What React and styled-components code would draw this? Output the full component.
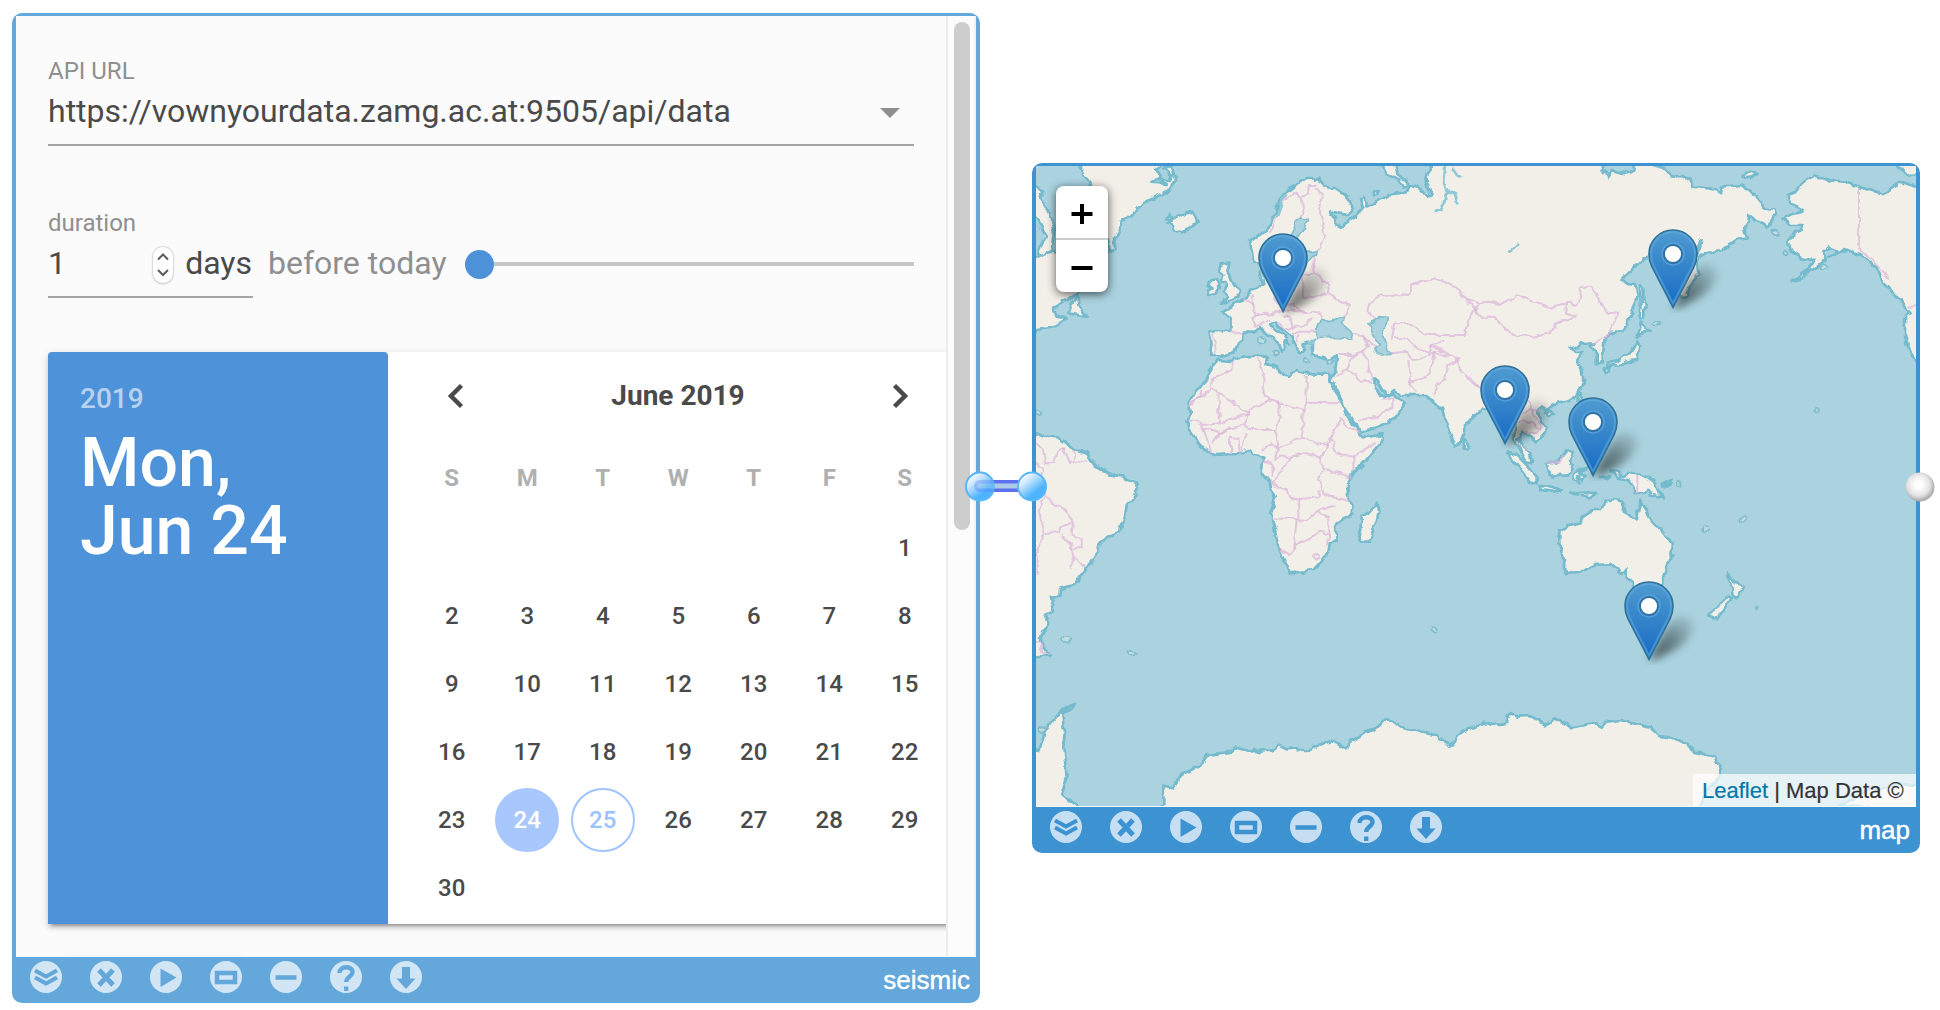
import React from 'react';
import styled, { createGlobalStyle } from 'styled-components';

const GlobalStyle = createGlobalStyle`
  *, *::before, *::after { box-sizing: border-box; }
  body { margin: 0; background: #fff; overflow: hidden; }
`;

const Canvas = styled.main`
  position: relative;
  display: flex;
  align-items: flex-start;
  gap: 52px;
  width: 1940px;
  height: 1010px;
  padding: 13px 0 0 12px;
  font-family: Roboto, "Noto Sans", sans-serif;
  color: #4a4a4a;
`;

const Widget = styled.section`
  display: flex;
  flex-direction: column;
  flex: none;
  width: ${p => p.$width}px;
  height: ${p => p.$height}px;
  margin-top: ${p => p.$top || 0}px;
  padding: 3px 4px 0;
  border-radius: 10px;
  background: ${p => p.$color};
`;

const WidgetBody = styled.div`
  position: relative;
  display: flex;
  flex: 1;
  min-height: 0;
  overflow: hidden;
  border-bottom: 1px solid #fff;
  background: #fbfbfb;
`;

const WidgetFooter = styled.footer`
  display: flex;
  align-items: flex-start;
  justify-content: space-between;
  height: 46px;
  padding: 4px 6px 0 14px;
`;

const ToolRow = styled.div`
  display: flex;
  gap: 28px;
`;

const ToolButton = styled.button`
  display: block;
  width: 32px;
  height: 32px;
  padding: 0;
  border: 0;
  border-radius: 50%;
  background: rgba(255, 255, 255, 0.7);
  color: ${p => p.$color};
  svg { display: block; }
`;

const WidgetName = styled.span`
  margin-top: 5px;
  font: 26px/28px "Liberation Sans", Arial, sans-serif;
  -webkit-text-stroke: 0.4px #fff;
  color: #fff;
`;

const ScrollContent = styled.div`
  width: 930px;
  padding: 41px 0 0 32px;
  overflow: hidden;
`;

const ScrollTrack = styled.div`
  width: 30px;
  padding: 6px 4px 0 6px;
  border-left: 2px solid #ececec;
  border-right: 2px solid #f1f1f1;
  background: #fcfcfc;
`;

const ScrollThumb = styled.div`
  width: 16px;
  height: 508px;
  border-radius: 8px;
  background: #cdcdcd;
`;

const Label = styled.div`
  height: 28px;
  font-size: 24px;
  line-height: ${p => (p.$low ? 30 : 28)}px;
  color: #8f8f8f;
`;

const SelectField = styled.div`
  display: flex;
  justify-content: space-between;
  width: 866px;
  height: 61px;
  padding: 6px 14px 0 0;
  border-bottom: 2px solid #a4a4a4;
  font-size: 32px;
  line-height: 40px;
`;

const Caret = styled.span`
  width: 0;
  height: 0;
  margin-top: 17px;
  border: 10px solid transparent;
  border-top-color: #8f8f8f;
  border-bottom: 0;
`;

const DurationGroup = styled.div`
  margin-top: 62px;
`;

const DurationRow = styled.div`
  display: flex;
  width: 866px;
  font-size: 32px;
  line-height: 40px;
`;

const NumberField = styled.div`
  display: flex;
  justify-content: space-between;
  width: 205px;
  height: 62px;
  padding: 7px 1px 0 0;
  border-bottom: 2px solid #a4a4a4;
`;

const NumberValue = styled.span`
  width: 105px;
`;

const Stepper = styled.span`
  width: 20px;
  height: 36px;
  margin: 4px 12px 0 0;
  border-radius: 10px;
  background: #fff;
  box-shadow: 0 0 1px 1px #dadada, 0 1px 2px #bbb;
  svg { display: block; }
`;

const Suffix = styled.span`
  margin-left: 15px;
  padding-top: 7px;
  white-space: nowrap;
  color: #8f8f8f;
`;

const Slider = styled.div`
  display: flex;
  align-items: center;
  flex: 1;
  height: 30px;
  margin: 13px 0 0 18px;
`;

const SliderKnob = styled.span`
  flex: none;
  width: 29px;
  height: 29px;
  border-radius: 50%;
  background: #4d91d9;
`;

const SliderRail = styled.span`
  flex: 1;
  height: 4px;
  background: #c6c6c6;
`;

const elevation = `
  0 6px 2px -4px rgba(0, 0, 0, 0.2),
  0 4px 4px rgba(0, 0, 0, 0.14),
  0 2px 10px rgba(0, 0, 0, 0.12)`;

const DatePicker = styled.div`
  display: flex;
  width: 920px;
  height: 572px;
  margin-top: 54px;
  border-radius: 4px 4px 0 0;
  background: #fff;
  box-shadow: ${elevation};
`;

const PickerTitle = styled.div`
  width: 340px;
  padding: 30px 32px;
  border-radius: 4px 4px 0 0;
  background: #4e92da;
  color: #fff;
  font-weight: 500;
`;

const PickerYear = styled.div`
  height: 47px;
  font-size: 28px;
  line-height: 33px;
  color: rgba(255, 255, 255, 0.6);
`;

const PickerDate = styled.div`
  font-size: 68px;
  line-height: 68px;
  white-space: pre-line;
`;

const PickerBody = styled.div`
  width: 554px;
  padding: 22px 0 0 26px;
`;

const MonthBar = styled.div`
  display: flex;
  align-items: center;
  justify-content: space-between;
  width: 528px;
  height: 44px;
  padding: 0 25px;
  font-size: 28px;
  line-height: 33px;
  font-weight: 700;
  svg { display: block; }
`;

const MonthName = styled.span`
  padding-bottom: 2px;
`;

const Weekdays = styled.div`
  display: grid;
  grid-template-columns: repeat(7, 75.5px);
  height: 96px;
  align-items: center;
  padding-top: 24px;
  font-size: 24px;
  font-weight: 700;
  text-align: center;
  color: #b0b0b0;
`;

const Days = styled.div`
  display: grid;
  grid-template-columns: repeat(7, 75.5px);
  grid-auto-rows: 68px;
  place-items: center;
`;

const Day = styled.span`
  grid-column-start: ${p => p.$column || 'auto'};
  width: 64px;
  height: 64px;
  border: 2px solid ${p => ({ selected: '#a8c7fd', today: '#a0c4ff' }[p.$state] || 'transparent')};
  border-radius: 50%;
  background: ${p => (p.$state === 'selected' ? '#a8c7fd' : 'transparent')};
  color: ${p => ({ selected: '#fff', today: '#9cc2ff' }[p.$state] || '#4a4a4a')};
  font-size: 24px;
  font-weight: 500;
  line-height: 60px;
  text-align: center;
`;

const LoadButton = styled.div`
  width: 180px;
  height: 72px;
  margin: 34px 0 0 16px;
  border-radius: 4px;
  background: #f5f5f5;
  box-shadow: ${elevation};
`;

const MapSvg = styled.svg`
  display: block;
  width: 880px;
  height: 640px;
  background: #aad3df;
`;

const ZoomControl = styled.div`
  position: absolute;
  left: 20px;
  top: 20px;
  width: 52px;
  border-radius: 8px;
  background: #fff;
  box-shadow: 0 2px 10px rgba(0, 0, 0, 0.65);
`;

const ZoomButton = styled.button`
  display: flex;
  align-items: center;
  justify-content: center;
  width: 52px;
  height: ${p => (p.$first ? 54 : 52)}px;
  padding: 4px 0 0;
  border: 0;
  border-bottom: ${p => (p.$first ? '2px solid #ccc' : '0')};
  background: none;
`;

const Attribution = styled.div`
  position: absolute;
  right: 0;
  bottom: 0;
  width: 223px;
  height: 32px;
  padding-left: 9px;
  background: rgba(255, 255, 255, 0.7);
  font: 22px/34px "Liberation Sans", Arial, sans-serif;
  -webkit-text-stroke: 0.2px currentColor;
  white-space: nowrap;
  color: #333;
`;

const AttributionLink = styled.a`
  color: #0078a8;
`;

const Pin = styled.svg`
  position: absolute;
  left: ${p => p.$x - 25}px;
  top: ${p => p.$y - 80}px;
  width: 92px;
  height: 84px;
`;

const Wire = styled.svg`
  position: absolute;
  left: 960px;
  top: 467px;
`;

const OutPort = styled.svg`
  position: absolute;
  left: 1904px;
  top: 471px;
`;

const toolGlyphs = {
  collapse: <path d="M5 9.500L16 15.500L27 9.500M5 16.500L16 22.500L27 16.500" strokeWidth="4" />,
  close: <path d="M9 9L23 24M23 9L9 24" strokeWidth="5" />,
  play: <path d="M10.500 7.500L26.500 16.500L10.500 26Z" fill="currentColor" stroke="none" />,
  frame: <rect x="7" y="12" width="18" height="9" strokeWidth="4.500" />,
  minus: <path d="M5.500 16.500H26.500" strokeWidth="4.500" />,
  help: <path d="M9.500 12C9.500 4.500 22.500 4.500 22.500 11C22.500 15.500 16.200 15.500 16.200 21M16.200 25.500V30" strokeWidth="4.300" />,
  down: <path d="M12 6H20V17.500H25.500L16 28L6.500 17.500H12Z" fill="currentColor" stroke="none" />,
};

function Tools({ color }) {
  return (
    <ToolRow>
      {Object.entries(toolGlyphs).map(([name, glyph]) => (
        <ToolButton key={name} $color={color} aria-label={name}>
          <svg width="32" height="32" fill="none" stroke="currentColor">{glyph}</svg>
        </ToolButton>
      ))}
    </ToolRow>
  );
}

const weekdays = ['S', 'M', 'T', 'W', 'T', 'F', 'S'];
const dayStates = { 24: 'selected', 25: 'today' };

function Calendar() {
  return (
    <DatePicker>
      <PickerTitle>
        <PickerYear>2019</PickerYear>
        <PickerDate>{'Mon,\nJun 24'}</PickerDate>
      </PickerTitle>
      <PickerBody>
        <MonthBar>
          <svg width="30" height="28" fill="none" stroke="#4a4a4a" strokeWidth="4.500"><path d="M22.500 3.500L12 14L22.500 24.500" /></svg>
          <MonthName>June 2019</MonthName>
          <svg width="30" height="28" fill="none" stroke="#4a4a4a" strokeWidth="4.500"><path d="M7.500 3.500L18 14L7.500 24.500" /></svg>
        </MonthBar>
        <Weekdays>{weekdays.map((d, i) => <span key={i}>{d}</span>)}</Weekdays>
        <Days>
          {Array.from({ length: 30 }, (_, i) => (
            <Day key={i} $column={i === 0 ? 7 : 0} $state={dayStates[i + 1]}>{i + 1}</Day>
          ))}
        </Days>
      </PickerBody>
    </DatePicker>
  );
}

/* Outlines use a grid of three units to one screen pixel. */
const lands = [
  // Europe and Asia
  '840,48 852,62 868,56 880,75 915,85 945,105 965,130 970,155 950,165 925,160 902,153 915,175 918,195 937,206 945,190 955,182 978,168 1000,145 990,120 1005,110 1012,142 1030,130 1060,115 1075,103 1110,100 1132,92 1140,75 1165,80 1195,110 1205,105 1190,70 1190,45 1205,25 1205,0 1710,0 1718,30 1735,52 1745,30 1780,40 1810,32 1814,0 1885,20 1900,25 1925,50 1960,48 1980,60 1985,80 2040,85 2055,88 2070,102 2072,80 2130,75 2160,92 2195,125 2200,145 2230,150 2235,165 2220,185 2215,200 2190,185 2175,180 2158,165 2155,185 2145,195 2150,235 2125,240 2090,260 2070,275 2035,275 2010,290 2000,320 2005,345 1985,370 1970,410 1950,410 1955,380 1975,330 1990,300 2010,275 2018,235 2010,240 2002,275 1970,300 1930,290 1900,310 1865,290 1840,292 1820,315 1775,360 1790,372 1815,375 1823,405 1810,450 1795,480 1775,510 1755,520 1738,517 1725,530 1722,555 1720,575 1722,600 1700,610 1700,585 1692,570 1682,560 1690,550 1668,552 1655,548 1640,562 1625,565 1635,576 1658,576 1640,600 1655,630 1660,660 1650,690 1635,710 1610,725 1570,735 1550,750 1540,742 1525,755 1535,785 1548,800 1545,820 1520,847 1510,840 1505,830 1480,818 1465,835 1475,855 1500,880 1505,907 1490,905 1475,880 1460,850 1452,830 1460,790 1450,760 1430,790 1410,780 1385,755 1360,745 1350,752 1330,775 1305,790 1305,815 1295,850 1280,855 1265,835 1245,780 1235,740 1225,745 1205,725 1190,705 1110,705 1095,690 1070,705 1060,695 1045,670 1032,655 1035,680 1050,705 1065,710 1090,700 1095,710 1125,730 1110,755 1080,785 1030,805 990,820 980,795 945,745 910,675 900,665 905,650 915,640 920,600 920,590 895,600 870,592 850,588 845,565 850,550 835,545 815,550 825,570 810,576 800,565 790,545 785,530 765,515 750,505 735,488 722,492 730,507 760,525 775,550 763,545 765,560 755,572 745,550 720,530 700,515 690,502 675,515 655,515 640,515 640,540 620,555 612,580 580,590 560,588 540,582 545,550 538,515 560,510 600,513 608,500 600,475 575,455 600,447 615,430 650,415 660,390 680,383 697,375 688,345 700,330 690,310 670,305 665,270 660,245 690,222 715,205 745,140 760,100 800,75',
  // Africa
  '565,600 600,603 640,590 700,585 710,590 710,615 740,625 780,650 800,630 850,640 897,642 902,668 920,700 940,740 950,770 985,810 995,832 1030,828 1058,822 1050,850 1000,910 965,945 950,970 955,1010 968,1040 965,1060 920,1090 915,1100 920,1140 900,1150 895,1180 850,1230 780,1240 770,1210 745,1160 735,1110 720,1060 735,1015 720,970 695,935 700,890 670,885 655,870 615,882 550,885 510,855 475,805 472,790 480,760 475,735 490,700 525,665 540,630',
  // Madagascar, Great Britain, Ireland, Iceland
  '1042,1030 1048,1055 1030,1110 1015,1148 995,1148 988,1130 995,1100 995,1070 1020,1055',
  '572,310 598,308 592,335 600,350 612,375 630,390 625,410 605,420 575,428 590,405 580,395 590,375 575,365 580,345 568,335',
  '545,360 565,358 568,375 560,400 535,408 532,390 545,382 533,375',
  '415,160 430,178 465,160 490,155 503,185 480,205 455,217 430,210 432,195 412,190 428,180 410,175',
  // Greenland and north-eastern Canada
  '150,0 150,25 165,50 180,70 225,200 240,275 250,275 260,230 270,205 275,180 300,170 340,125 375,115 420,85 435,60 425,18 400,25 425,45 420,60 380,55 410,72 370,68 390,45 375,30 400,10 400,0',
  '0,70 40,95 30,115 60,165 75,210 70,260 50,300 30,300 22,270 50,230 20,175 0,160', '0,300 75,270 150,395 110,420 70,445 80,470 110,475 75,500 50,505 18,510 0,510', '145,405 148,435 170,470 115,460 125,430',
  // South America
  '0,815 45,830 85,832 105,845 130,870 170,880 195,915 240,943 280,950 320,970 318,1000 290,1035 285,1070 270,1115 210,1145 205,1175 165,1230 130,1275 90,1287 88,1308 62,1310 75,1320 65,1355 45,1365 58,1385 32,1425 30,1440 45,1470 62,1485 35,1492 0,1490',
  // Sri Lanka, Arctic islands
  '1300,835 1314,855 1312,872 1302,870', '1055,0 1070,40 1110,60 1120,80 1140,75 1100,40 1090,0', '1032,92 1043,90 1043,105 1032,106', '2140,48 2160,35 2182,42 2165,52 2145,55',
  // Sakhalin and Japan
  '1830,375 1840,385 1840,420 1852,440 1840,450 1840,472 1828,475 1832,430', '1832,485 1845,500 1860,512 1840,520 1818,527 1830,510', '1820,540 1828,560 1822,600 1790,605 1780,615 1750,612 1735,620 1740,605 1770,598 1785,585 1800,580 1812,560', '1725,620 1738,625 1732,640 1725,640', '1650,700 1658,705 1652,730 1645,715', '1545,755 1560,750 1570,758 1555,768',
  // Indonesia, the Philippines and New Guinea
  '1430,877 1460,885 1490,915 1520,950 1520,970 1500,965 1460,915', '1525,978 1555,980 1595,990 1570,995 1530,990', '1550,912 1575,908 1600,885 1612,868 1630,878 1620,900 1628,915 1615,945 1570,950 1555,935', '1632,940 1642,928 1675,920 1650,935 1665,955 1655,965 1648,945 1645,970 1635,965', '1620,1000 1660,995 1690,1000 1700,998 1680,1010 1650,1003', '1720,950 1740,948 1735,955 1710,954', '1742,930 1765,935 1775,950 1800,935 1850,952 1875,970 1885,995 1905,1012 1870,1005 1850,990 1840,1002 1815,995 1800,965 1770,957', '1895,975 1925,960 1920,970 1900,982',
  // Australia and New Zealand
  '1832,1020 1840,1040 1850,1055 1870,1090 1900,1115 1925,1150 1925,1190 1900,1245 1895,1285 1875,1290 1815,1285 1810,1265 1790,1255 1790,1225 1775,1245 1765,1225 1740,1210 1690,1212 1665,1232 1605,1243 1602,1225 1603,1200 1588,1150 1588,1115 1610,1100 1650,1090 1660,1070 1690,1050 1710,1050 1730,1025 1750,1020 1780,1025 1778,1055 1820,1078', '2092,1240 2105,1255 2115,1270 2145,1275 2130,1300 2118,1315 2108,1305 2105,1285', '2095,1308 2105,1315 2070,1365 2050,1377 2037,1365 2060,1345',
  // Alaska and western North America
  '2700,95 2645,75 2610,65 2590,85 2555,105 2540,95 2500,85 2440,65 2390,60 2350,48 2320,65 2300,95 2270,105 2285,130 2320,155 2290,160 2260,175 2275,195 2315,195 2318,210 2295,220 2275,245 2285,275 2315,295 2350,300 2335,330 2310,345 2285,365 2315,355 2350,325 2390,300 2385,275 2400,262 2420,270 2400,290 2440,270 2490,285 2510,300 2545,330 2560,370 2600,410 2625,440 2640,455 2625,470 2625,530 2645,585 2700,660', '2600,20 2645,48 2700,40 2700,0 2610,0',
  // Antarctica
  '375,1960 400,1930 400,1880 430,1885 455,1840 510,1820 535,1785 600,1775 615,1762 660,1775 730,1768 745,1755 770,1768 795,1765 825,1777 880,1750 905,1740 930,1755 950,1765 960,1745 1000,1720 1030,1710 1060,1682 1090,1682 1115,1702 1160,1713 1215,1722 1225,1738 1245,1740 1260,1760 1285,1728 1320,1702 1360,1688 1390,1695 1430,1688 1440,1662 1460,1670 1500,1668 1545,1695 1575,1675 1595,1685 1625,1702 1680,1692 1695,1690 1715,1700 1730,1685 1770,1680 1830,1695 1860,1705 1885,1728 1920,1732 1960,1745 1990,1775 2045,1787 2075,1812 2065,1855 2030,1890 2000,1960',
  '0,1960 0,1770 30,1770 45,1710 80,1665 135,1628 125,1645 100,1660 105,1710 100,1760 110,1850 95,1905 150,1945 150,1960', '2430,1937 2520,1890 2620,1870 2700,1872 2700,1960',
];

const seas = [
  '875,477 895,485 915,480 940,470 935,492 970,525 965,537 920,532 885,533 865,537 858,515',
  '1018,495 1045,470 1072,472 1070,490 1058,505 1062,530 1080,583 1050,585 1032,567 1045,550 1028,520',
  '800,185 815,173 832,180 825,200 800,230 832,278 865,272 862,285 840,290 822,325 790,350 740,372 705,365 690,335 760,330 780,225',
];

const inlets = 'M1245,0L1240,60L1252,92L1245,130L1232,152L1208,155M1250,95L1275,103L1282,130M1262,30L1290,50M765,100L740,170M835,548L860,537M1432,280L1470,255';

const borders = [
  '725,215 735,180 760,120 800,95 815,108 835,100 840,75 865,75', '815,108 820,160 815,172', '855,85 875,110 870,150 885,230 865,270',
  '850,290 855,340 890,370 895,395 930,425 960,435 955,460 935,470', '820,345 815,410 850,415 890,400', '735,380 740,430 790,435 820,460 860,455 875,475', '645,415 670,435 680,465 720,460 760,450 820,455', '670,435 665,400', '690,460 670,475 675,500 720,480', '745,485 765,510 790,500 785,475 760,470', '790,500 820,500 845,475', '785,520 810,515 855,515', '800,545 805,525', '600,513 640,522', '550,515 560,545 555,580', '820,345 850,340',
  '1015,455 1020,430 1055,405 1090,410 1140,400 1140,375 1215,355 1270,375 1310,420 1350,430 1375,425 1400,430 1450,420 1460,405 1510,425 1560,440 1620,428 1640,435 1655,385 1680,380 1700,400 1715,435 1740,460 1765,455 1755,485 1735,520 1685,550', '1310,420 1350,470 1390,470 1440,520 1510,530 1565,515 1575,490 1640,468 1605,458 1610,430', '1305,525 1315,480 1350,430', '1015,455 1035,475', '1085,540 1095,490 1130,490 1170,515 1200,525 1245,525 1305,525', '1095,535 1130,535 1160,565 1200,580 1205,555 1240,545', '1200,555 1250,580 1285,600 1290,630 1320,655 1350,680 1390,690', '1075,580 1135,575 1150,600 1180,595 1215,575 1255,590', '1135,600 1140,665 1155,695', '1140,665 1185,655 1205,620 1215,575', '1210,710 1220,675 1245,660 1255,615 1285,600', '1305,650 1335,675 1375,690 1400,690',
  '925,585 965,585 995,575 1010,600 1015,635 1030,660', '920,650 950,625 970,585', '950,630 990,660 1025,665', '985,780 1040,770 1090,740 1090,715 1060,720', '970,520 1000,530 1015,560 995,575', '1000,535 1035,560',
  '605,605 605,630 545,660 540,690 475,737', '545,685 655,760 570,790 515,795', '565,705 570,790', '655,755 720,718', '685,590 690,620 705,640 700,695 720,718 745,725 820,750 830,730 830,645', '830,728 930,730', '820,750 820,800 810,830 860,850 900,855', '745,725 750,770 735,810 745,850', '655,760 640,790 620,800 580,810 550,850', '640,790 655,810 735,810', '515,690 510,710 485,735', '475,785 500,785 520,805 545,880', '520,805 575,820 600,800', '600,880 600,830 625,835 630,880', '635,870 650,820', '695,870 725,850 745,865 810,835', '745,850 735,900 760,890 780,890 750,940 725,970', '700,900 730,920 720,950', '780,890 825,880 875,890 895,855 910,820 930,780', '905,840 920,880 970,890 1035,850', '930,770 945,795 990,820', '875,890 880,930 965,950', '970,890 970,935', '880,930 870,960 880,1000 900,1010 955,1020', '725,970 770,985 775,1010 805,1020 805,1075', '720,1075 800,1078 835,1080 865,1050 915,1040', '870,990 865,1015 805,1020', '790,1170 800,1078', '790,1160 830,1140 870,1115 895,1120 895,1075 865,1055', '750,1165 780,1185 795,1165', '865,1180 868,1190 855,1198 848,1187 865,1180', '895,1120 890,1160',
  '18,850 40,870 45,910 70,910 75,885 105,860', '100,860 120,910 170,900', '130,870 135,905', '18,910 40,930 25,970 50,1010 75,1035 105,1050 130,1085 125,1120 155,1135 155,1165 120,1165', '45,1010 25,1050 45,1120 90,1115 95,1095 125,1090', '45,1120 20,1180 20,1245', '95,1120 125,1160 130,1190 165,1220', '130,1190 120,1230', '18,1445 32,1450 38,1482 60,1482',
  '2487,85 2487,270 2520,295 2580,355', '2640,440 2700,440', '1822,950 1822,998', '1550,912 1590,905 1600,885', '1480,760 1500,745 1530,760', '1460,790 1500,785 1530,810', '1490,720 1510,760 1535,800 1520,820 1485,815', '1475,855 1500,875',
];

const islets = [[110, 1440, 14], [305, 1480, 10], [1212, 1408, 8], [2362, 752, 8], [2138, 1078, 10], [2028, 1108, 9], [2180, 1342, 4], [695, 540, 12], [828, 601, 8], [903, 602, 8], [738, 578, 9], [1945, 972, 7], [2238, 218, 10], [2268, 280, 8], [2378, 320, 10], [25, 760, 9], [35, 1710, 10], [1880, 490, 9]];

function WorldMap() {
  return (
    <MapSvg viewBox="18 18 2640 1920" aria-label="World map">
      <defs>
        <filter id="rugged" x="0" y="0" width="2700" height="1960" filterUnits="userSpaceOnUse">
          <feTurbulence type="fractalNoise" baseFrequency="0.035" numOctaves="2" seed="4" result="noise" />
          <feDisplacementMap in="SourceGraphic" in2="noise" scale="20" xChannelSelector="R" yChannelSelector="G" result="moved" />
          <feGaussianBlur in="moved" stdDeviation="1.300" />
        </filter>
      </defs>
      <g filter="url(#rugged)" strokeLinejoin="round">
        <g fill="#f2efe9" stroke="#74bbcd" strokeWidth="8">
          {lands.map((points, i) => <polygon key={i} points={points} />)}
        </g>
        <g fill="none" stroke="#dcb4d8" strokeOpacity="0.700" strokeWidth="6">
          {borders.map((points, i) => <polyline key={i} points={points} />)}
        </g>
        <g fill="#aad3df" stroke="#7dbdce" strokeWidth="5">
          {seas.map((points, i) => <polygon key={i} points={points} />)}
        </g>
        <path d={inlets} fill="none" stroke="#8fc8d6" strokeWidth="9" />
        <g fill="#c4dcdc" stroke="#7dbdce" strokeWidth="5">
          {islets.map(([x, y, r]) => <ellipse key={`${x}-${y}`} cx={x} cy={y} rx={r} ry={r * 0.7} />)}
        </g>
      </g>
    </MapSvg>
  );
}

const pins = [[247, 147], [637, 143], [469, 279], [557, 311], [613, 495]];

function MapPin({ x, y }) {
  return (
    <Pin $x={x} $y={y} viewBox="0 0 92 84">
      <defs>
        <linearGradient id="pinFill" x1="0" y1="0" x2="0" y2="1">
          <stop offset="0" stopColor="#4f9bd0" />
          <stop offset="1" stopColor="#176bc4" />
        </linearGradient>
        <linearGradient id="pinShade" x1="0" y1="1" x2="1" y2="0">
          <stop offset="0" stopColor="#000" stopOpacity="0.650" />
          <stop offset="0.450" stopColor="#000" stopOpacity="0.400" />
          <stop offset="1" stopColor="#000" stopOpacity="0" />
        </linearGradient>
        <filter id="pinBlur" x="-30%" y="-30%" width="160%" height="160%"><feGaussianBlur stdDeviation="4" /></filter>
      </defs>
      <path d="M25 80C33 65 40 43 55 36C68 31 74 40 67 53C60 66 40 75 25 80Z" fill="url(#pinShade)" filter="url(#pinBlur)" />
      <path d="M25 78.500L4 38C1.700 33.500 1 29.500 1 25A24 24 0 0 1 49 25C49 29.500 48.300 33.500 46 38Z" fill="url(#pinFill)" stroke="#2e7199" strokeWidth="1.600" />
      <path d="M25 74.500L6 37.500C3.500 32.500 3 29 3 25A22 22 0 0 1 47 25C47 29 46.500 32.500 44 37.500Z" fill="none" stroke="#68ade0" strokeOpacity="0.550" strokeWidth="1.800" />
      <circle cx="25" cy="25" r="11" fill="none" stroke="#62a7db" strokeOpacity="0.700" strokeWidth="1.500" />
      <circle cx="25" cy="25" r="9" fill="#fff" stroke="#2e71a3" strokeWidth="1.800" />
    </Pin>
  );
}

function Connection() {
  return (
    <Wire width="100" height="40">
      <defs>
        <linearGradient id="portBlue" x1="0.150" y1="0.100" x2="0.750" y2="0.850">
          <stop offset="0" stopColor="#fff" />
          <stop offset="0.300" stopColor="#cce6fd" />
          <stop offset="0.800" stopColor="#4eb4ff" />
        </linearGradient>
      </defs>
      <circle cx="20" cy="19.500" r="14" fill="url(#portBlue)" stroke="#5ab7f8" strokeWidth="2" />
      <path d="M20 19H66" stroke="#5c70f0" strokeWidth="12" strokeLinecap="round" />
      <path d="M20 19H66" stroke="#aacbe5" strokeWidth="5" strokeLinecap="round" />
      <circle cx="20" cy="19.500" r="14" fill="url(#portBlue)" stroke="#5ab7f8" strokeWidth="2" opacity="0.700" />
      <circle cx="72" cy="19.500" r="14" fill="url(#portBlue)" stroke="#5ab7f8" strokeWidth="2" />
    </Wire>
  );
}

export default function App() {
  return (
    <>
      <GlobalStyle />
      <Canvas>
        <Widget $width={968} $height={990} $color="#64a7da">
          <WidgetBody>
            <ScrollContent>
              <Label>API URL</Label>
              <SelectField>
                <span>https://vownyourdata.zamg.ac.at:9505/api/data</span>
                <Caret />
              </SelectField>
              <DurationGroup>
                <Label $low>duration</Label>
                <DurationRow>
                  <NumberField>
                    <NumberValue>1</NumberValue>
                    <Stepper>
                      <svg width="20" height="36" fill="none" stroke="#5b5b5b" strokeWidth="2"><path d="M5 12.500L10 7.500L15 12.500M5 23L10 28L15 23" /></svg>
                    </Stepper>
                    <span>days</span>
                  </NumberField>
                  <Suffix>before today</Suffix>
                  <Slider><SliderKnob /><SliderRail /></Slider>
                </DurationRow>
              </DurationGroup>
              <Calendar />
              <LoadButton />
            </ScrollContent>
            <ScrollTrack><ScrollThumb /></ScrollTrack>
          </WidgetBody>
          <WidgetFooter>
            <Tools color="#64a7da" />
            <WidgetName>seismic</WidgetName>
          </WidgetFooter>
        </Widget>
        <Widget $width={888} $height={690} $top={150} $color="#3d92d2">
          <WidgetBody>
            <WorldMap />
            {pins.map(([x, y]) => <MapPin key={x} x={x} y={y} />)}
            <ZoomControl>
              <ZoomButton $first aria-label="Zoom in"><svg width="22" height="22" stroke="#000" strokeWidth="4"><path d="M.500 11H21.500M11 1V21" /></svg></ZoomButton>
              <ZoomButton aria-label="Zoom out"><svg width="22" height="22" stroke="#000" strokeWidth="4"><path d="M.500 11H21.500" /></svg></ZoomButton>
            </ZoomControl>
            <Attribution><AttributionLink>Leaflet</AttributionLink> | Map Data ©</Attribution>
          </WidgetBody>
          <WidgetFooter>
            <Tools color="#3d92d2" />
            <WidgetName>map</WidgetName>
          </WidgetFooter>
        </Widget>
        <Connection />
        <OutPort width="32" height="32">
          <defs>
            <radialGradient id="portGrey" cx="0.450" cy="0.420" r="0.550">
              <stop offset="0.200" stopColor="#fff" />
              <stop offset="0.700" stopColor="#e3e3e3" />
              <stop offset="1" stopColor="#adadad" />
            </radialGradient>
          </defs>
          <circle cx="16" cy="16" r="14.500" fill="url(#portGrey)" />
        </OutPort>
      </Canvas>
    </>
  );
}
